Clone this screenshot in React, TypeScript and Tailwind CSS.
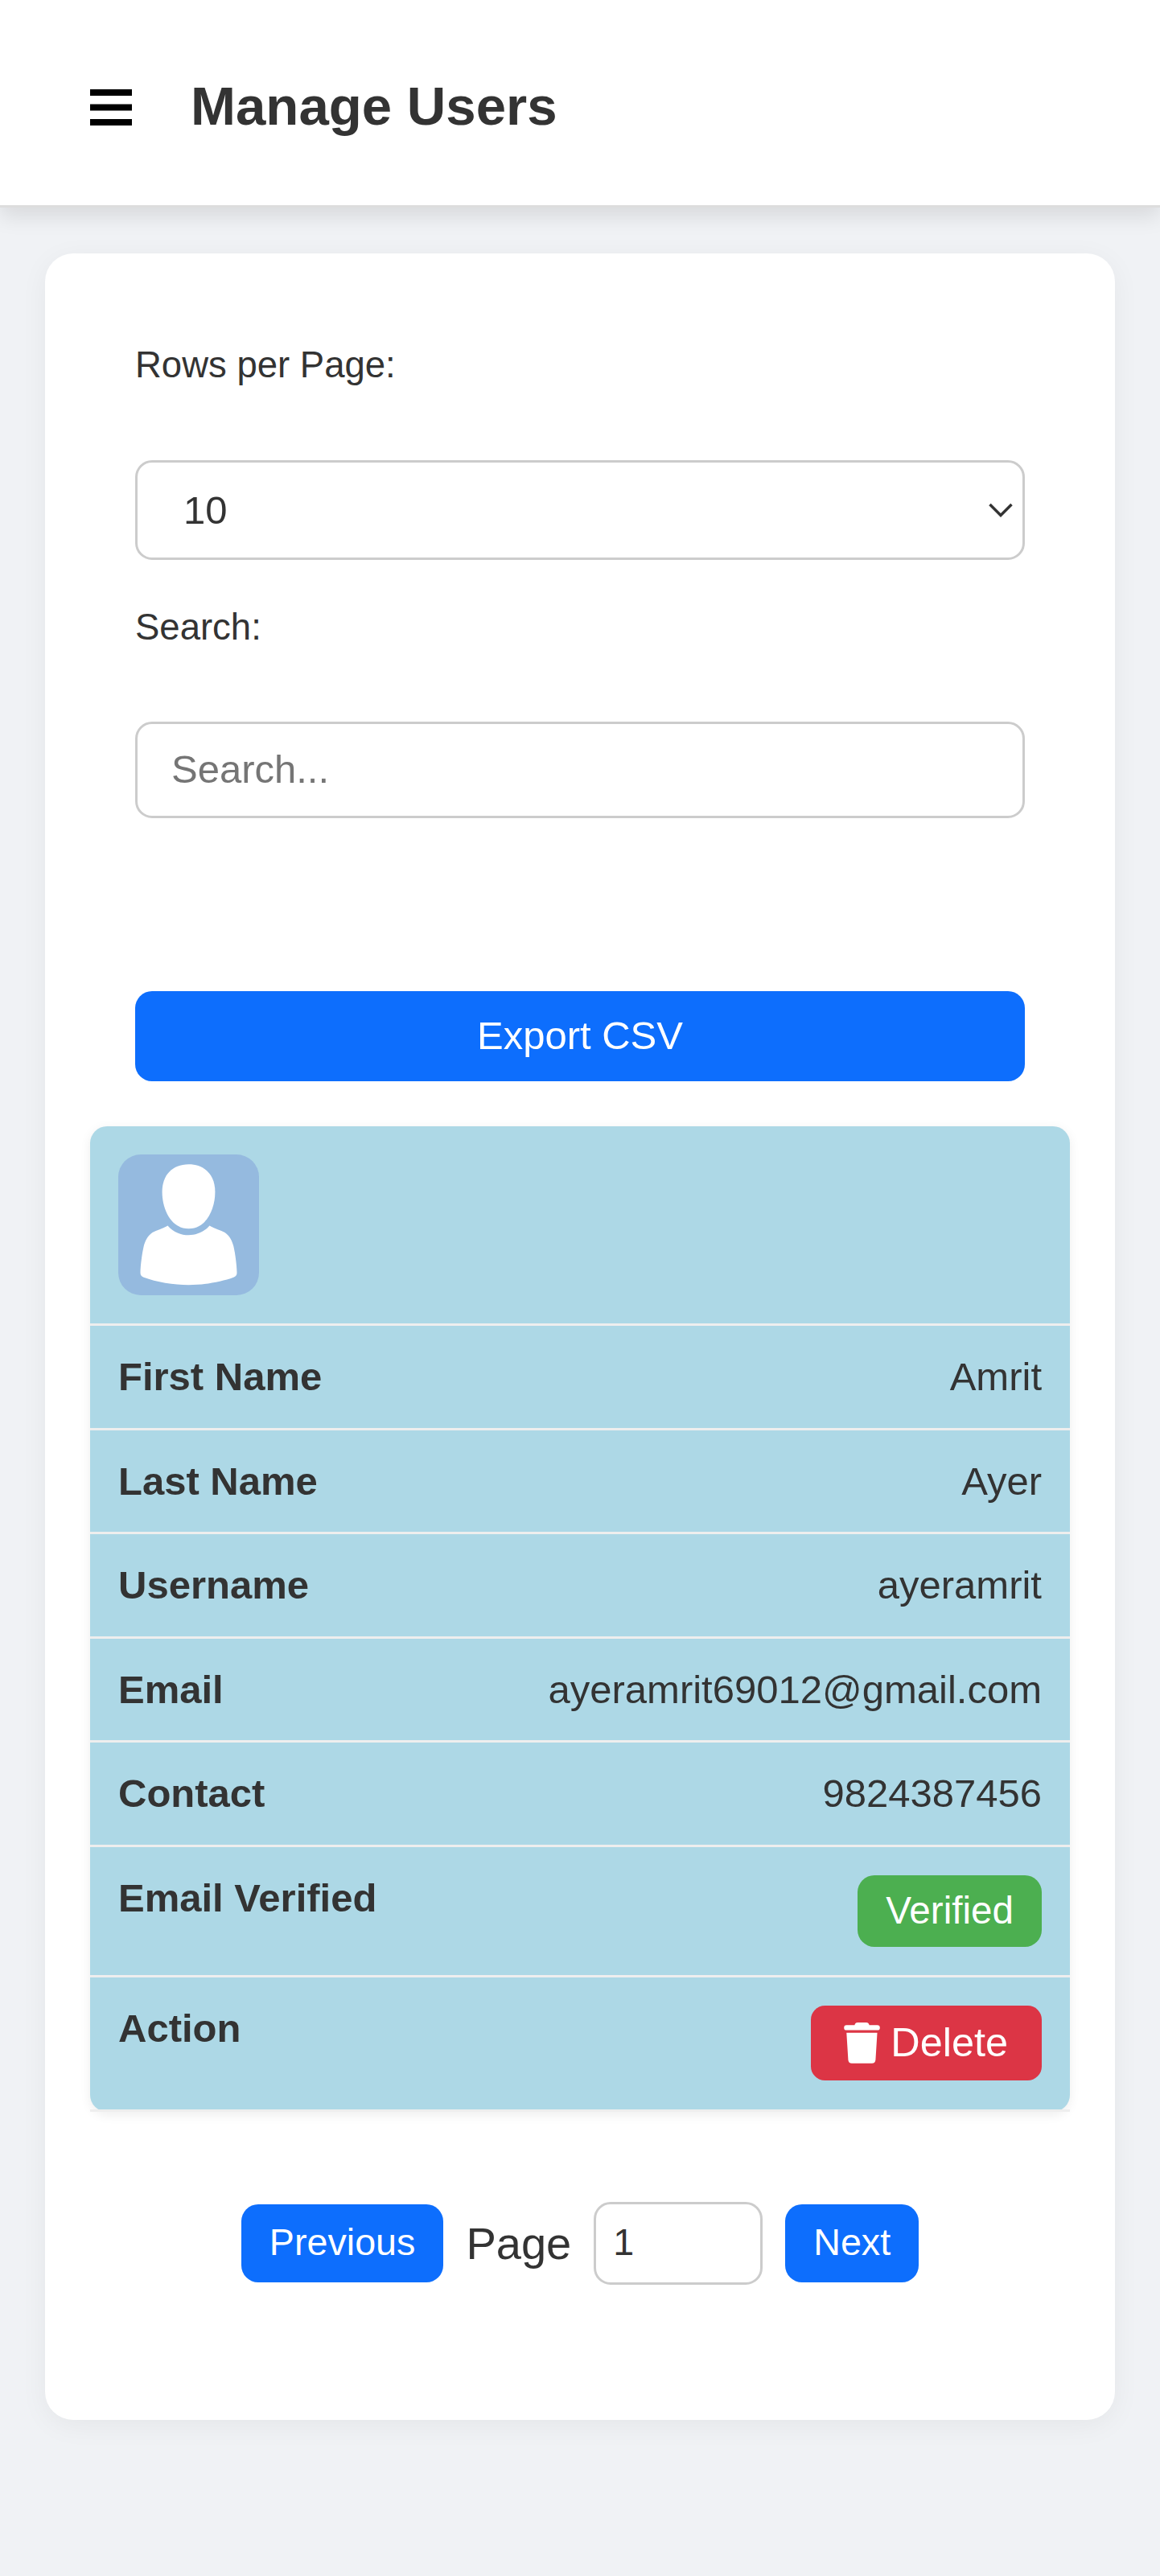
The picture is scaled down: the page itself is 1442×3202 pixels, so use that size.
import type { ReactNode } from "react";

function MenuIcon() {
  return (
    <svg className="h-[45px] w-[52px]" viewBox="0 0 52 45" fill="#000">
      <rect y="0" width="52" height="8" />
      <rect y="18.5" width="52" height="8" />
      <rect y="37" width="52" height="8" />
    </svg>
  );
}

function Avatar() {
  return (
    <svg className="block size-[175px] rounded-[28px] bg-[#95badf]" viewBox="0 0 175 175" fill="#fff">
      <path d="M87.5 12.3C108 12.3 120.4 26 120.4 46.5C120.4 68 109.5 92.3 87.5 92.3C65.5 92.3 54.6 68 54.6 46.5C54.6 26 67 12.3 87.5 12.3Z" />
      <path d="M61.5 88.5C75 104.3 100 104.3 113.5 88.5C119.5 92.5 127 93.8 132.5 97C138.5 101 141.8 108 143.3 114C145.6 124 147.3 138 147.5 147C147.5 150 146.3 151.5 143.3 152.8C128 158.5 106 162.3 87.5 162.3C69 162.3 47 158.5 31.7 152.8C28.7 151.5 27.5 150 27.5 147C27.7 138 29.4 124 31.7 114C33.2 108 36.5 101 42.5 97C48 93.8 55.5 92.5 61.5 88.5Z" />
    </svg>
  );
}

function TrashIcon() {
  return (
    <svg className="h-[51px] w-[45px] shrink-0" viewBox="0 0 45 51" fill="#fff">
      <path d="M17.2 0H27.8C30.2 0 31.3 1.4 31.6 3.2H41.6A3.2 3.2 0 0 1 41.6 9.6H3.4A3.2 3.2 0 0 1 3.4 3.2H13.4C13.7 1.4 14.8 0 17.2 0Z" />
      <path d="M3.3 12.8H41.5L39.4 46.3C39.2 49.3 37.5 50.8 34.9 50.8H9.9C7.3 50.8 5.6 49.3 5.4 46.3Z" />
    </svg>
  );
}

function Row({ label, className = "h-[129.5px]", children }: { label: string; className?: string; children: ReactNode }) {
  return (
    <div className={`flex items-start justify-between border-b-3 border-[#eee] px-[35px] pt-[35px] ${className}`}>
      <span className="font-bold">{label}</span>
      {children}
    </div>
  );
}

const fields = [
  ["First Name", "Amrit"],
  ["Last Name", "Ayer"],
  ["Username", "ayeramrit"],
  ["Email", "ayeramrit69012@gmail.com"],
  ["Contact", "9824387456"],
];

export default function App() {
  return (
    <div className="min-h-[3202px] bg-[#f0f2f5] font-['Liberation_Sans',Arial,sans-serif] text-[49px] leading-[56px] text-[#333]">
      <header className="flex h-[258px] items-center gap-[73px] border-b-3 border-[#ddd] bg-white pt-[12px] pl-[112px] shadow-[0_10.5px_24.5px_rgba(0,0,0,0.1)]">
        <button aria-label="Menu">
          <MenuIcon />
        </button>
        <h1 className="pb-[4px] text-[67.2px] leading-[78px] font-bold">Manage Users</h1>
      </header>

      <main className="mx-[56px] mt-[57px] h-[2693px] rounded-[35px] bg-white px-[56px] pt-[112px] shadow-[0_7px_35px_rgba(0,0,0,0.05)]">
        <section className="flex flex-col px-[56px]">
          <label htmlFor="rows" className="h-[145px] pt-px text-[45.5px] leading-[52px]">
            Rows per Page:
          </label>
          <div className="relative h-[124px]">
            <select
              id="rows"
              className="block h-full w-full appearance-none rounded-[21px] border-3 border-[#ccc] bg-white pl-[57px]"
              defaultValue="10"
            >
              <option>10</option>
              <option>25</option>
              <option>50</option>
            </select>
            <svg className="pointer-events-none absolute top-[52px] right-[13px] h-[20px] w-[34px]" viewBox="0 0 34 20" fill="none" stroke="#333" strokeWidth="3.5">
              <path d="M3.5 3L17 16.5L30.5 3" />
            </svg>
          </div>
          <label htmlFor="search" className="mt-[56px] h-[145px] pt-[2px] text-[45.5px] leading-[52px]">
            Search:
          </label>
          <input
            id="search"
            placeholder="Search..."
            className="h-[120px] rounded-[21px] border-3 border-[#ccc] bg-white px-[42px] pb-[2px] placeholder:text-[#757575]"
          />
          <button className="mt-[215px] h-[112px] rounded-[21px] bg-[#0d6efd] pb-[2px] text-white">Export CSV</button>
        </section>

        <section className="mt-[56px] rounded-[21px] bg-[#add8e6] shadow-[0_3.5px_14px_rgba(0,0,0,0.07)]">
          <div className="h-[248px] border-b-3 border-[#eee] p-[35px]">
            <Avatar />
          </div>
          {fields.map(([label, value]) => (
            <Row key={label} label={label}>
              <span>{value}</span>
            </Row>
          ))}
          <Row label="Email Verified" className="h-[162px]">
            <span className="flex h-[89.5px] items-center rounded-[21px] bg-[#4caf50] px-[35px] text-[47.6px] text-white">
              Verified
            </span>
          </Row>
          <Row label="Action" className="h-[167px]">
            <button className="flex h-[93px] items-center gap-[13px] rounded-[17.5px] bg-[#dc3545] pr-[42px] pl-[41px] text-[50.4px] text-white">
              <TrashIcon />
              Delete
            </button>
          </Row>
        </section>

        <nav className="mt-[112px] flex items-center justify-center gap-[28px]">
          <button className="h-[97px] rounded-[21px] bg-[#0d6efd] px-[35px] pb-[2px] text-[46.67px] text-white">Previous</button>
          <span className="pt-px text-[56px] leading-[64px]">Page</span>
          <input
            aria-label="Page number"
            defaultValue="1"
            className="h-[103px] w-[210px] rounded-[21px] border-3 border-[#ccc] bg-white pb-[2px] pl-[21px] text-[46.67px]"
          />
          <button className="h-[97px] rounded-[21px] bg-[#0d6efd] px-[35px] pb-[2px] text-[46.67px] text-white">Next</button>
        </nav>
      </main>
    </div>
  );
}
